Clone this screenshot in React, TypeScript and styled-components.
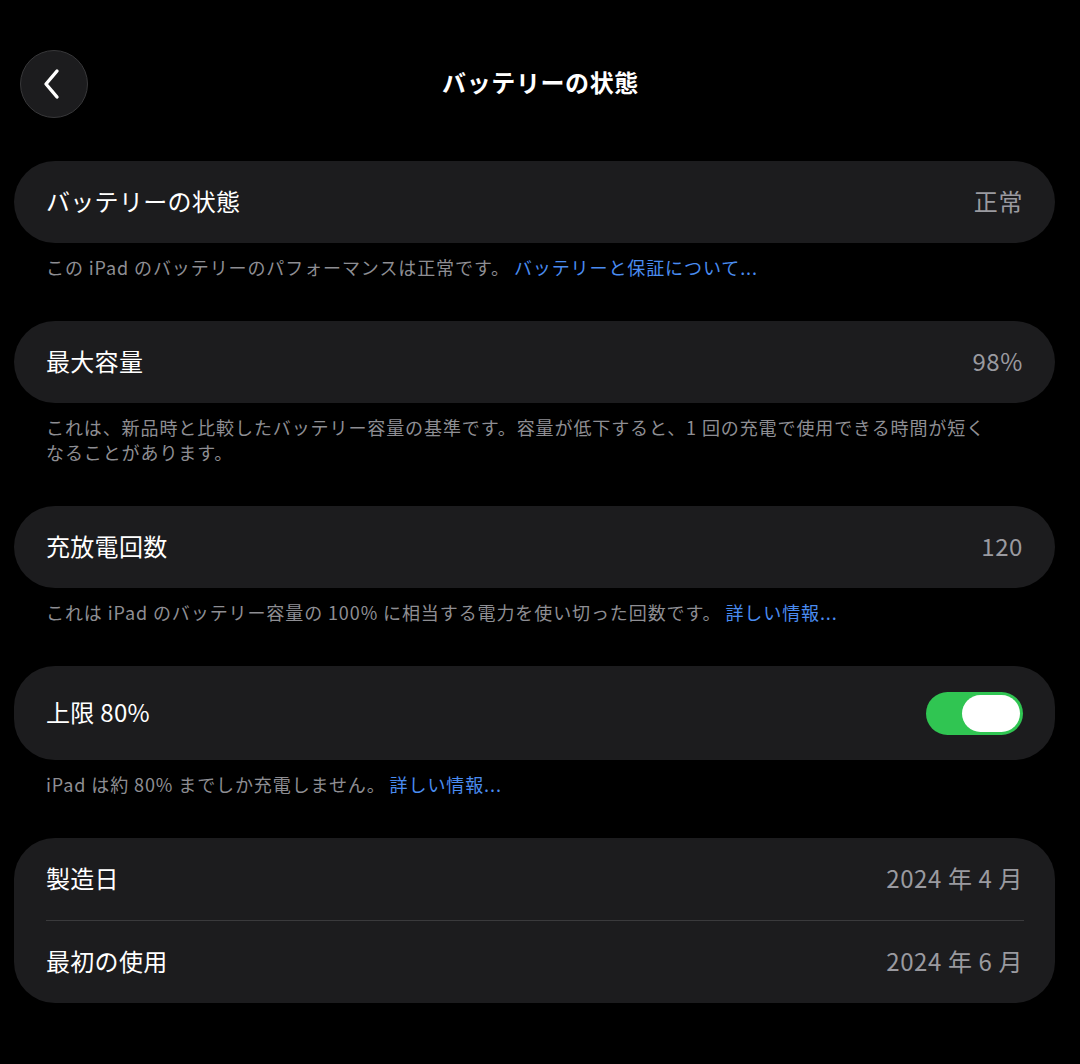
import React, { useState } from 'react';
import styled, { createGlobalStyle } from 'styled-components';

const GlobalStyle = createGlobalStyle`
  html, body {
    margin: 0;
    padding: 0;
    background: #000;
  }
  body {
    font-family: "Noto Sans CJK JP", "Noto Sans", "Liberation Sans", sans-serif;
    color: #fff;
    -webkit-font-smoothing: antialiased;
  }
`;

const Page = styled.div`
  width: 1080px;
  min-height: 1064px;
  box-sizing: border-box;
  background: #000;
  padding: 50px 25px 40px 14px;
`;

const Header = styled.div`
  position: relative;
  display: flex;
  align-items: center;
  justify-content: center;
  height: 68px;
  margin-bottom: 43px;
`;

const BackButton = styled.button`
  position: absolute;
  left: 6px;
  top: 0;
  width: 68px;
  height: 68px;
  border-radius: 50%;
  background: #1c1c1e;
  border: 1px solid #38383a;
  display: flex;
  align-items: center;
  justify-content: center;
  padding: 0 4px 0 0;
  cursor: pointer;
`;

const Title = styled.h1`
  margin: -4px 0 0 12px;
  font-size: 24px;
  line-height: 1;
  font-weight: 700;
  letter-spacing: 0.6px;
  color: #fff;
`;

const Section = styled.section`
  margin-bottom: 41px;
`;

const Card = styled.div`
  background: #1c1c1e;
  border-radius: 41px;
`;

const Row = styled.div<{ $tall?: boolean }>`
  display: flex;
  align-items: center;
  justify-content: space-between;
  box-sizing: border-box;
  height: ${(p) => (p.$tall ? '94px' : '82px')};
  padding: 0 32px 4px 32px;
`;

const Label = styled.span`
  font-size: 24px;
  color: #fff;
  letter-spacing: 0.3px;
`;

const Value = styled.span`
  font-size: 24px;
  color: #9a9aa0;
  letter-spacing: 0.6px;
`;

const Separator = styled.div`
  height: 1px;
  background: #3a3a3c;
  margin: 0 31px 0 32px;
`;

const Footer = styled.p`
  margin: 0;
  padding: 12px 32px 0 32px;
  font-size: 18px;
  line-height: 25px;
  color: #8e8e93;
  letter-spacing: 0.9px;
`;

const Link = styled.a`
  color: #4a8cf0;
  text-decoration: none;
  margin-left: 4px;
`;

const Toggle = styled.button<{ $on: boolean }>`
  width: 97px;
  height: 43px;
  border-radius: 22px;
  border: none;
  padding: 3px;
  margin-top: 4px;
  background: ${(p) => (p.$on ? '#30c552' : '#39393d')};
  display: flex;
  justify-content: ${(p) => (p.$on ? 'flex-end' : 'flex-start')};
  cursor: pointer;
`;

const Knob = styled.span`
  width: 58px;
  height: 37px;
  border-radius: 19px;
  background: #fff;
`;

const Chevron = () => (
  <svg width="22" height="32" viewBox="0 0 22 32" fill="none">
    <path d="M16 3 L5 16 L16 29" stroke="#fff" strokeWidth="3.4" strokeLinecap="round" strokeLinejoin="round" />
  </svg>
);

export default function App() {
  const [limit, setLimit] = useState(true);

  return (
    <Page>
      <GlobalStyle />
      <Header>
        <BackButton aria-label="戻る">
          <Chevron />
        </BackButton>
        <Title>バッテリーの状態</Title>
      </Header>

      <Section>
        <Card>
          <Row>
            <Label>バッテリーの状態</Label>
            <Value>正常</Value>
          </Row>
        </Card>
        <Footer>
          この iPad のバッテリーのパフォーマンスは正常です。<Link>バッテリーと保証について...</Link>
        </Footer>
      </Section>

      <Section>
        <Card>
          <Row>
            <Label>最大容量</Label>
            <Value>98%</Value>
          </Row>
        </Card>
        <Footer>
          これは、新品時と比較したバッテリー容量の基準です。容量が低下すると、1 回の充電で使用できる時間が短く
          <br />
          なることがあります。
        </Footer>
      </Section>

      <Section>
        <Card>
          <Row>
            <Label>充放電回数</Label>
            <Value>120</Value>
          </Row>
        </Card>
        <Footer>
          これは iPad のバッテリー容量の 100% に相当する電力を使い切った回数です。<Link>詳しい情報...</Link>
        </Footer>
      </Section>

      <Section>
        <Card>
          <Row $tall>
            <Label>上限 80%</Label>
            <Toggle $on={limit} onClick={() => setLimit(!limit)} aria-label="上限80%">
              <Knob />
            </Toggle>
          </Row>
        </Card>
        <Footer>
          iPad は約 80% までしか充電しません。<Link>詳しい情報...</Link>
        </Footer>
      </Section>

      <Section>
        <Card>
          <Row>
            <Label>製造日</Label>
            <Value>2024 年 4 月</Value>
          </Row>
          <Separator />
          <Row>
            <Label>最初の使用</Label>
            <Value>2024 年 6 月</Value>
          </Row>
        </Card>
      </Section>
    </Page>
  );
}
